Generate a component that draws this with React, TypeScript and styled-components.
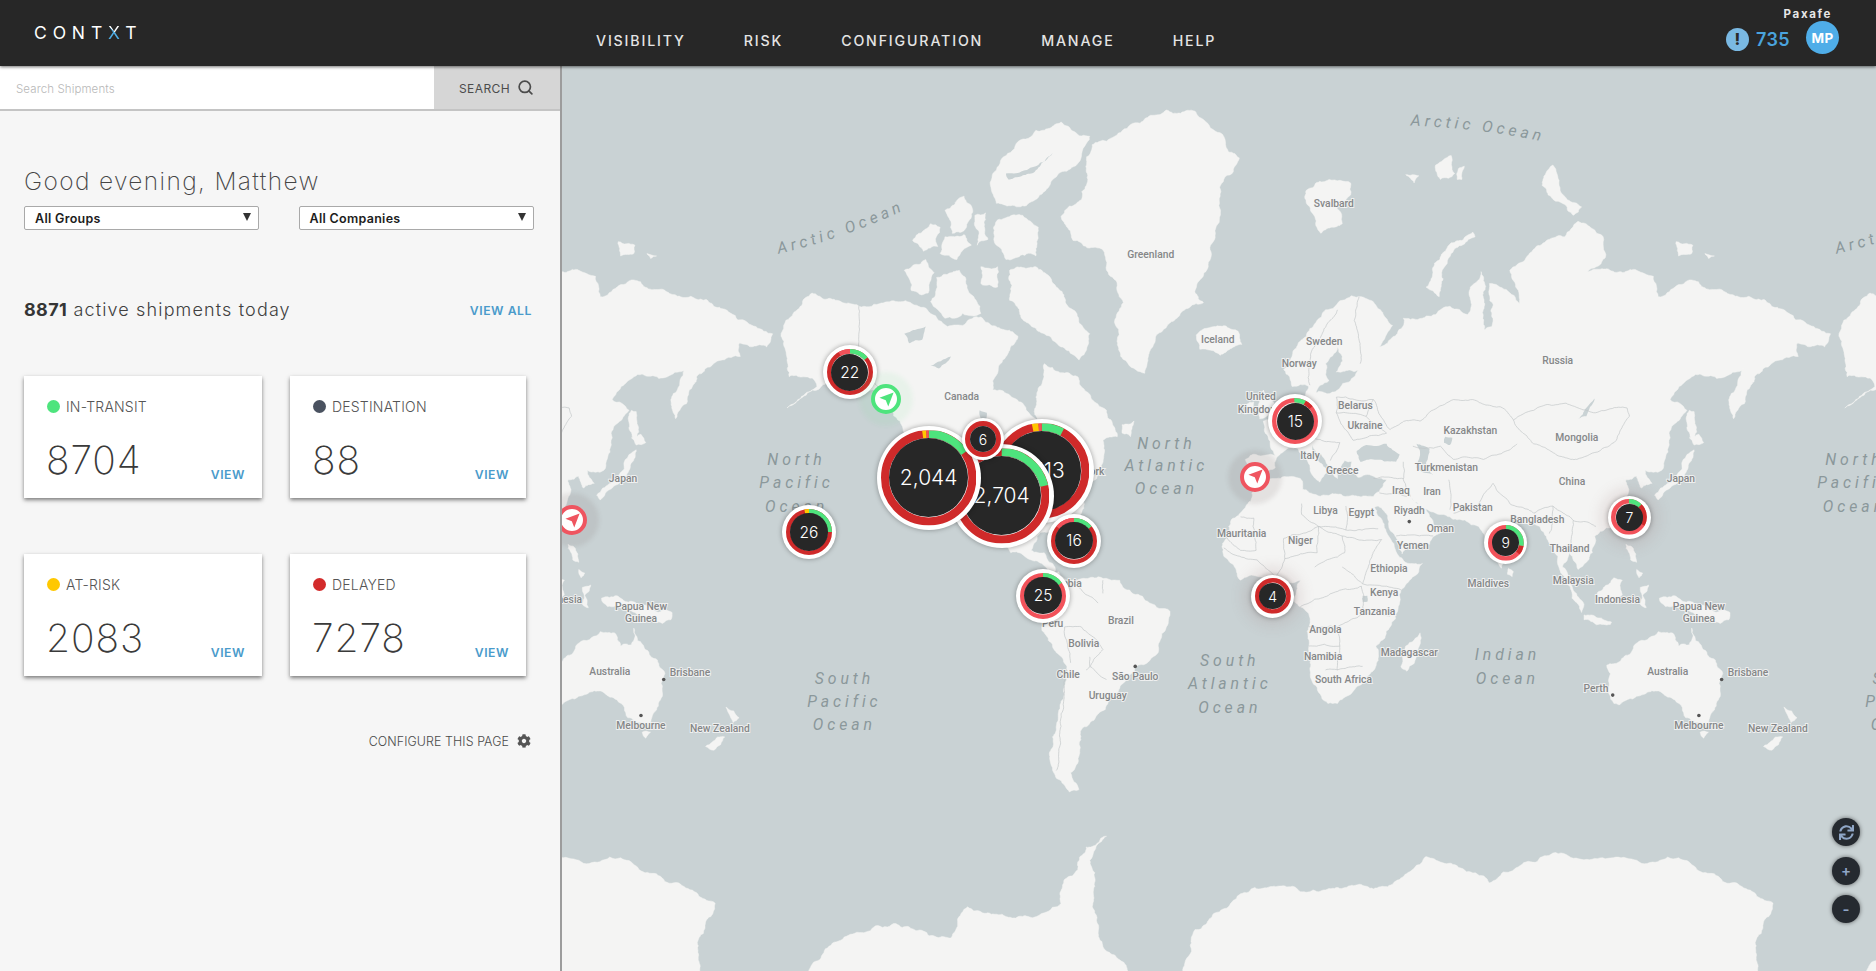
import React from 'react';
import styled, { createGlobalStyle } from 'styled-components';
import { FaCog, FaSync } from 'react-icons/fa';
import { Search } from 'lucide-react';

const Global = createGlobalStyle`
  html, body { margin: 0; padding: 0; height: 100%; overflow: hidden; background: #c9d2d4; }
  * { box-sizing: border-box; }
  #root { height: 100%; }
`;

const UI = `"Inter", "Liberation Sans", sans-serif`;

const Page = styled.div`
  display: grid;
  grid-template-columns: 562px 1fr;
  grid-template-rows: 66px 1fr;
  width: 100%;
  height: 100vh;
  font-family: ${UI};
`;

const Header = styled.header`
  grid-column: 1 / 3;
  display: flex;
  background: #272727;
  color: #e8e8e8;
  box-shadow: 0 1px 3px rgba(0, 0, 0, 0.55);
  position: relative;
  z-index: 5;
`;
const LogoCell = styled.div`
  width: 562px;
  padding: 24px 0 0 34px;
  flex: none;
`;
const Logo = styled.div`
  font-size: 17.5px;
  line-height: 18px;
  font-weight: 400;
  letter-spacing: 5.85px;
  color: #fff;
`;
const LogoX = styled.span`
  background: linear-gradient(45deg, #4fb0e8 46%, #fff 47%);
  -webkit-background-clip: text;
  background-clip: text;
  color: transparent;
`;
const Nav = styled.nav`
  display: flex;
  gap: 58px;
  padding: 32.5px 0 0 34px;
  flex: 1;
`;
const NavItem = styled.a`
  font-size: 14.2px;
  line-height: 16px;
  font-weight: 500;
  letter-spacing: 1.84px;
  color: #e4e4e4;
`;
const Account = styled.div`
  display: flex;
  flex-direction: column;
  align-items: flex-end;
  padding: 8px 37px 0 0;
`;
const Company = styled.div`
  font-size: 11.5px;
  line-height: 13px;
  font-weight: 700;
  letter-spacing: 1.65px;
  margin-right: 7px;
  color: #e6e6e6;
`;
const AccountRow = styled.div`
  display: flex;
  align-items: center;
`;
const AlertIcon = styled.span`
  width: 23px;
  height: 23px;
  border-radius: 50%;
  background: #7ab9e3;
  color: #2a2a2a;
  font-size: 16px;
  font-weight: 800;
  display: flex;
  align-items: center;
  justify-content: center;
  margin-top: 3px;
`;
const AlertCount = styled.span`
  font-size: 18px;
  font-weight: 600;
  letter-spacing: 0.4px;
  color: #4aa3dd;
  margin: 3px 16px 0 7px;
`;
const Avatar = styled.span`
  width: 33px;
  height: 33px;
  border-radius: 50%;
  background: #4fade8;
  color: #fff;
  font-size: 13.5px;
  font-weight: 700;
  letter-spacing: 0.4px;
  display: flex;
  align-items: center;
  justify-content: center;
`;

const Sidebar = styled.aside`
  background: #f6f6f6;
  border-right: 2px solid #9c9c9c;
  position: relative;
  z-index: 3;
  overflow: hidden;
`;
const SearchBar = styled.div`
  display: flex;
  height: 45px;
  border-bottom: 2px solid #c4c4c4;
`;
const SearchField = styled.div`
  flex: 1;
  background: #fff;
  color: #b8b8b8;
  font-size: 11.5px;
  font-weight: 300;
  letter-spacing: 0.1px;
  display: flex;
  align-items: center;
  padding: 2px 0 0 16px;
`;
const SearchButton = styled.div`
  width: 126px;
  background: #d6d6d6;
  color: #4c4c4c;
  font-size: 12px;
  letter-spacing: 0.4px;
  display: flex;
  align-items: center;
  gap: 7px;
  padding: 2px 0 0 25px;
  svg { margin-top: -2px; }
`;
const Content = styled.div`
  padding: 55px 0 0 24px;
`;
const Greeting = styled.h1`
  margin: 0;
  font-size: 24.5px;
  line-height: 30px;
  font-weight: 200;
  letter-spacing: 1.36px;
  color: #454545;
`;
const Filters = styled.div`
  display: flex;
  gap: 39.5px;
  margin-top: 10px;
`;
const Dropdown = styled.div`
  width: 235px;
  height: 24px;
  border: 1px solid #a9a9a9;
  border-radius: 2px;
  background: #fff;
  display: flex;
  align-items: center;
  justify-content: space-between;
  padding: 0 7px 0 10px;
  font-size: 12.5px;
  font-weight: 600;
  letter-spacing: 0.3px;
  color: #1c1c1c;
`;
const Caret = styled.span`
  width: 0;
  height: 0;
  border-left: 4px solid transparent;
  border-right: 4px solid transparent;
  border-top: 8px solid #333;
  margin-top: -2px;
`;
const SummaryRow = styled.div`
  display: flex;
  justify-content: space-between;
  align-items: center;
  height: 26px;
  margin: 66px 28px 0 0;
`;
const Summary = styled.div`
  font-size: 18px;
  font-weight: 300;
  letter-spacing: 1.14px;
  color: #404040;
`;
const SummaryCount = styled.b`
  font-weight: 700;
  letter-spacing: 0.4px;
  color: #353535;
`;
const LinkText = styled.a`
  font-size: 12.2px;
  line-height: 14px;
  font-weight: 600;
  letter-spacing: 0.55px;
  color: #4a9bcb;
`;
const ViewAll = styled(LinkText)`
  margin-top: 3px;
`;
const Cards = styled.div`
  display: grid;
  grid-template-columns: 238px 236px;
  grid-auto-rows: 122px;
  column-gap: 28px;
  row-gap: 56px;
  margin-top: 54px;
`;
const Card = styled.div`
  background: #fff;
  box-shadow: 0 2px 4px rgba(0, 0, 0, 0.5);
  padding: 22px 17px 16px 23px;
  display: flex;
  flex-direction: column;
  justify-content: space-between;
`;
const CardLabel = styled.div`
  display: flex;
  align-items: center;
  gap: 6px;
  font-size: 14px;
  line-height: 17px;
  font-weight: 300;
  letter-spacing: 0.2px;
  color: #555;
`;
const Dot = styled.span<{ $c: string }>`
  width: 13px;
  height: 13px;
  border-radius: 50%;
  background: ${p => p.$c};
`;
const CardBottom = styled.div`
  display: flex;
  justify-content: space-between;
  align-items: flex-end;
`;
const CardValue = styled.div`
  font-size: 39px;
  line-height: 44px;
  font-weight: 200;
  letter-spacing: 0.9px;
  margin-left: -1px;
  color: #3a3a3a;
`;
const Configure = styled.div`
  display: flex;
  justify-content: flex-end;
  align-items: center;
  gap: 8px;
  height: 16px;
  margin: 57px 29px 0 0;
  font-size: 12.4px;
  font-weight: 300;
  letter-spacing: 0.1px;
  color: #4a4a4a;
  svg { color: #555; }
`;

const MapPane = styled.main`
  position: relative;
  overflow: hidden;
  background: #c9d2d4;
`;
const MapSvg = styled.svg`
  display: block;
  width: 100%;
  height: 100%;
`;
const Land = styled.polygon`
  fill: #f4f4f3;
  stroke: #f4f4f3;
  stroke-width: 0.4;
  stroke-linejoin: round;
`;
const Water = styled.polygon`
  fill: #c9d2d4;
`;
const Border = styled.polyline`
  fill: none;
  stroke: #c1c5c6;
  stroke-width: 0.55;
`;
const PlaceText = styled.text`
  font-family: "Roboto", "Liberation Sans", sans-serif;
  font-size: 8.6px;
  font-weight: 500;
  fill: #858788;
  text-anchor: middle;
  paint-order: stroke;
  stroke: rgba(245, 245, 245, 0.85);
  stroke-width: 1.6px;
`;
const CityDot = styled.circle`
  fill: #555;
`;
const OceanText = styled.text`
  font-family: "Roboto", "Liberation Sans", sans-serif;
  font-size: 13.2px;
  font-style: italic;
  letter-spacing: 3.3px;
  fill: #8b989b;
  text-anchor: middle;
`;
const ArcticText = styled(OceanText)`
  text-anchor: start;
`;

const Marker = styled.div<{ $x: number; $y: number; $s: number; $z: number }>`
  position: absolute;
  left: ${p => p.$x - 562 - p.$s / 2}px;
  top: ${p => p.$y - 66 - p.$s / 2}px;
  width: ${p => p.$s}px;
  height: ${p => p.$s}px;
  z-index: ${p => p.$z};
`;
const BubbleShell = styled(Marker)<{ $halo?: boolean }>`
  border-radius: 50%;
  background: #fff;
  box-shadow: 0 0 5px rgba(0, 0, 0, 0.35) ${p => (p.$halo ? ', 0 0 14px 8px rgba(150, 110, 115, 0.16)' : '')};
  display: flex;
  align-items: center;
  justify-content: center;
`;
const BubbleRing = styled.svg<{ $inset: number }>`
  position: absolute;
  inset: ${p => p.$inset}px;
  width: calc(100% - ${p => p.$inset * 2}px);
  height: calc(100% - ${p => p.$inset * 2}px);
  transform: rotate(-90deg);
`;
const BubbleCore = styled.div<{ $s: number; $f: number }>`
  position: relative;
  width: ${p => p.$s}px;
  height: ${p => p.$s}px;
  border-radius: 50%;
  background: #272727;
  color: #fff;
  font-size: ${p => p.$f}px;
  font-weight: 300;
  display: flex;
  align-items: center;
  justify-content: center;
`;
const Pin = styled(Marker)<{ $c: string; $h: string }>`
  border-radius: 50%;
  background: #fff;
  border: 4px solid ${p => p.$c};
  box-shadow: 0 0 4px 12px ${p => p.$h};
  display: flex;
  align-items: center;
  justify-content: center;
  color: ${p => p.$c};
`;
const MapControls = styled.div`
  position: absolute;
  right: 16px;
  bottom: 47.7px;
  display: flex;
  flex-direction: column;
  gap: 10.6px;
`;
const MapButton = styled.button`
  width: 28px;
  height: 28px;
  padding: 0;
  border: 0;
  border-radius: 50%;
  background: #252a30;
  color: #8fa6c6;
  font-family: ${UI};
  font-size: 15px;
  font-weight: 600;
  box-shadow: 0 0 4px rgba(0, 0, 0, 0.55);
  display: flex;
  align-items: center;
  justify-content: center;
`;

const G = '#4ee47d', Y = '#ffc800', R = '#cf2a2a', P = '#f2525a';

const LAND = [
  // Eurasia + Africa
  '1041,384 1050,380 1066,381 1060,365 1056,352 1075,345 1087,336 1093,326 1095,315 1099,317 1100,328 1118,326 1129,318 1136,309 1117,311 1122,298 1118,290 1108,304 1111,318 1099,329 1094,323 1080,323 1073,309 1080,298 1092,281 1108,259 1122,251 1138,248 1150,255 1164,272 1155,287 1153,290 1168,279 1173,266 1185,267 1200,263 1212,256 1227,263 1229,240 1238,227 1241,237 1241,276 1247,273 1245,237 1259,242 1270,254 1262,226 1284,206 1308,198 1319,185 1340,198 1342,215 1326,228 1368,226 1382,231 1386,248 1400,240 1414,234 1435,242 1453,248 1470,250 1488,258 1516,273 1530,279 1525,290 1502,287 1503,298 1474,308 1463,323 1449,350 1447,329 1467,301 1442,315 1414,315 1396,334 1410,343 1395,362 1389,393 1375,393 1381,404 1372,408 1368,398 1359,401 1361,412 1354,437 1333,448 1331,462 1319,476 1312,462 1306,474 1315,488 1303,474 1298,457 1287,440 1270,435 1258,460 1255,475 1241,449 1236,440 1212,432 1198,428 1176,414 1195,432 1206,444 1195,455 1172,463 1164,445 1152,423 1149,424 1160,447 1168,463 1178,471 1189,471 1171,493 1162,524 1150,540 1152,552 1139,571 1118,588 1110,588 1095,560 1094,513 1083,504 1087,485 1052,482 1037,485 1023,465 1022,454 1029,435 1043,421 1048,409 1060,401 1087,400 1089,409 1109,414 1148,415 1153,411 1159,401 1148,398 1135,399 1128,392 1130,386 1124,385 1120,392 1118,400 1112,392 1108,385 1096,370 1106,390 1110,394 1103,403 1092,384 1085,375 1075,376 1067,383 1066,391 1049,403 1041,398',
  // North America
  '653,281 661,265 679,245 700,251 718,256 735,254 749,252 778,262 792,273 820,265 841,276 851,281 841,298 834,312 830,326 855,337 867,351 866,332 873,304 901,315 925,343 934,365 922,368 919,394 905,415 900,440 907,458 903,460 895,440 870,445 862,460 873,462 880,471 882,478 872,472 862,468 845,462 820,445 800,425 775,395 755,359 746,343 732,326 714,323 693,319 658,341 683,323 679,316 660,315 658,301',
  // Greenland
  '913,121 925,118 953,103 975,92 999,93 1006,100 1020,111 1027,127 1036,132 1030,145 1023,150 1020,164 1016,195 1010,223 999,245 1006,253 985,265 968,279 960,298 957,312 943,304 934,284 932,267 939,253 925,226 922,209 897,201 887,181 904,167 908,142',
  // Canadian Arctic
  '839,131 866,109 887,102 911,114 904,131 883,148 869,163 858,172 845,172 833,170 828,155 830,145',
  '833,185 855,180 868,190 866,214 841,217 833,205',
  '844,226 866,223 883,240 897,259 911,279 902,301 887,290 873,279 855,267 844,251',
  '756,226 774,217 781,228 776,245 762,243',
  '783,232 802,226 816,251 820,262 790,266 778,252',
  '763,201 778,187 786,190 784,206 772,210',
  '790,176 806,164 812,172 808,190 796,195',
  '790,198 806,196 812,205 800,217 786,212',
  '815,180 824,178 826,200 817,205',
  '820,223 834,223 834,240 820,237',
  '938,355 948,352 945,365 938,362',
  // South America
  '885,478 894,485 918,482 936,485 961,504 978,511 975,524 964,549 950,557 939,571 924,593 904,610 902,632 895,646 902,660 894,662 880,644 883,607 892,560 871,527 873,518 868,500',
  // Australia & Tasmania
  '1343,556 1363,546 1370,536 1386,528 1398,529 1403,540 1412,539 1414,525 1424,543 1440,563 1438,580 1428,607 1421,604 1409,600 1400,585 1389,579 1368,582 1354,589 1349,588 1345,571',
  '1421,612 1428,612 1424,617',
  // New Zealand
  '1491,591 1502,600 1497,604 1495,600',
  '1490,616 1481,627 1474,624 1484,616',
  // Madagascar, Sri Lanka
  '1187,529 1185,546 1176,561 1171,557 1175,540 1182,535',
  '1261,475 1265,478 1264,482 1260,480',
  // Indonesia, Philippines, New Guinea
  '1304,478 1310,480 1324,505 1322,512 1314,500',
  '1324,514 1347,520 1346,522 1324,518',
  '1335,496 1349,483 1356,485 1356,497 1349,503 1338,500',
  '1371,491 1378,489 1373,498 1376,508 1371,505',
  '1387,500 1400,498 1420,506 1446,512 1445,518 1430,520 1418,514 1405,508 1392,507',
  '1359,455 1364,457 1368,470 1363,468',
  '1368,476 1373,479 1370,483',
  // Japan, Sakhalin
  '1383,414 1388,408 1400,402 1406,392 1410,380 1416,376 1413,386 1408,398 1396,408 1386,418',
  '1412,366 1420,363 1424,370 1416,372',
  '1412,343 1416,344 1417,371 1413,366',
  // UK, Ireland, Iceland
  '1056,326 1063,332 1066,345 1053,350 1052,340',
  '1042,338 1048,336 1047,345 1040,346',
  '1000,280 1015,273 1035,277 1038,288 1020,297 1003,292',
  // Arctic islands
  '1092,159 1111,150 1129,153 1129,163 1117,173 1122,187 1104,195 1099,181 1092,170',
  '1231,194 1233,198 1213,212 1205,228 1203,248 1192,240 1199,220 1213,203',
  '1298,138 1303,153 1310,167 1322,173 1315,180 1308,171 1294,163 1289,155 1292,145',
  '1175,146 1186,147 1182,153',
  '1200,138 1213,130 1216,145 1204,150',
  '1219,141 1224,139 1222,150 1218,150',
  '1401,202 1415,205 1414,212 1403,214',
  '1425,212 1433,214 1428,216',
  // Antarctica
  '980,830 989,812 999,777 1016,763 1037,747 1062,741 1157,741 1192,716 1245,738 1298,713 1368,719 1403,717 1456,741 1482,755 1467,788 1467,830',
  '668,830 676,812 693,791 749,772 795,784 809,758 855,766 873,763 887,755 890,735 901,727 908,708 925,699 911,719 915,763 918,780 943,812 950,830',
];

const WATER = [
  '1134,377 1142,372 1159,371 1170,380 1167,386 1148,384 1137,386',
  '1184,371 1195,375 1192,387 1198,397 1184,391 1187,379',
  '1319,350 1333,333 1326,348',
  '756,279 774,273 771,284 760,287',
  '778,306 795,298 785,308',
  '819,343 825,345 824,351 820,350',
  '1208,365 1214,366 1212,372 1207,370',
  '1139,498 1143,498 1143,503 1139,503',
  '841,145 866,139 880,128 862,145 843,150',
];

const BORDERS = [
  '718,256 718,290 746,343',
  '780,378 838,378 860,385',
  '1136,248 1132,268 1137,290 1137,304',
  '1118,259 1097,292 1094,309 1095,322',
  '1117,332 1148,334 1142,348 1117,345 1117,332',
  '1117,345 1131,368 1159,362 1142,348',
  '1148,334 1162,359 1181,351 1187,352 1215,334 1231,334 1254,340 1265,351 1282,343 1309,337 1332,345 1360,341 1362,348 1351,368 1318,384 1282,371 1268,357 1265,351',
  '1181,373 1204,373 1215,384 1240,384 1268,371',
  '1087,355 1098,366 1120,370 1112,385',
  '1075,345 1080,370',
  '1173,386 1173,401 1179,415',
  '1211,401 1212,426',
  '1148,400 1173,400',
  '1153,412 1176,415',
  '1167,448 1198,448',
  '1215,429 1234,426 1243,410 1248,404 1262,421 1282,429 1298,423 1295,446',
  '1298,423 1315,435 1334,440',
  '1315,435 1312,462',
  '1088,421 1088,430 1102,440 1125,443 1125,423',
  '1125,443 1152,442',
  '1022,446 1037,460 1050,460 1048,433 1037,432',
  '1073,450 1102,440 1101,462 1074,467 1073,450',
  '1102,440 1122,448 1124,462 1099,474',
  '1122,448 1155,451 1139,488 1122,474',
  '1023,458 1051,468 1066,482',
  '1074,467 1066,482',
  '1087,507 1138,490 1139,513 1118,524 1094,524',
  '1094,540 1120,540 1118,560 1108,560',
  '1118,560 1139,557',
  '1139,513 1162,515',
  '1118,524 1120,540',
  '1139,488 1171,493',
  '890,524 904,524 922,543 908,560',
  '895,554 890,524',
  '892,560 883,644',
  '911,549 911,557 925,568',
  '901,490 918,504',
  '922,485 922,496',
];

// Breaks a coarse traced outline into an irregular coastline (seeded, so every load is the same).
function coast(points: string, seed: number, amp: number, closed: boolean): string {
  let s = seed * 7919 + 17;
  const rnd = () => {
    s = (s * 16807) % 2147483647;
    return s / 2147483647 - 0.5;
  };
  const pts = points.split(' ').map(p => p.split(',').map(Number));
  const out: number[][] = [];
  const split = (a: number[], b: number[]) => {
    const dx = b[0] - a[0], dy = b[1] - a[1];
    const l = Math.hypot(dx, dy);
    if (l < 2.4) return;
    const d = Math.max(-2.2, Math.min(2.2, rnd() * l * amp));
    const m = [(a[0] + b[0]) / 2 - (dy / l) * d, (a[1] + b[1]) / 2 + (dx / l) * d];
    split(a, m);
    out.push(m);
    split(m, b);
  };
  pts.forEach((p, i) => {
    out.push(p);
    const next = pts[i + 1] || (closed ? pts[0] : null);
    if (next) split(p, next);
  });
  return out.map(p => `${p[0].toFixed(1)},${p[1].toFixed(1)}`).join(' ');
}

const LAND_SHAPES = LAND.map((p, i) => coast(p, i + 1, 0.3, true));
const WATER_SHAPES = WATER.map((p, i) => coast(p, i + 101, 0.2, true));
const BORDER_LINES = BORDERS.map((p, i) => coast(p, i + 201, 0.16, false));

const PLACES: [string, number, number][] = [
  ['Greenland', 962, 216], ['Canada', 804, 334], ['Iceland', 1018, 287], ['Svalbard', 1115, 173],
  ['Sweden', 1107, 288], ['Norway', 1086, 307], ['Russia', 1302, 304], ['United', 1054, 334], ['Kingdom', 1052, 345],
  ['Belarus', 1133, 342], ['Ukraine', 1141, 359], ['Kazakhstan', 1229, 363], ['Mongolia', 1318, 369], ['Italy', 1095, 384],
  ['Greece', 1122, 396], ['Turkmenistan', 1209, 394], ['Iraq', 1171, 413], ['Iran', 1197, 414], ['China', 1314, 405],
  ['Japan', 1405, 403], ['Pakistan', 1231, 427], ['Libya', 1108, 430], ['Egypt', 1138, 431], ['Riyadh', 1178, 430],
  ['Oman', 1204, 445], ['Bangladesh', 1285, 437], ['Mauritania', 1038, 449], ['Niger', 1087, 455], ['Yemen', 1181, 459],
  ['Thailand', 1312, 461], ['Ethiopia', 1161, 478], ['Maldives', 1244, 491], ['Malaysia', 1315, 488], ['Kenya', 1157, 498],
  ['Indonesia', 1352, 504], ['Tanzania', 1149, 514], ['Angola', 1108, 529], ['Papua New', 1420, 510], ['Guinea', 1420, 520],
  ['Madagascar', 1178, 548], ['Namibia', 1106, 552], ['South Africa', 1123, 571], ['Australia', 1394, 564], ['Brisbane', 1461, 565],
  ['Perth', 1334, 578], ['Melbourne', 1420, 609], ['New Zealand', 1486, 612], ['Peru', 880, 524], ['Brazil', 937, 522],
  ['Bolivia', 906, 541], ['Chile', 893, 567], ['São Paulo', 949, 568], ['Uruguay', 926, 584], ['Colombia', 886, 491], ['New York', 905, 397],
];

const CITIES: [number, number][] = [[1439, 568], [1348, 581], [1420, 598], [949, 557], [1178, 436]];

const OCEANS: [string, number, number][] = [
  ['North', 666, 389], ['Pacific', 666, 408], ['Ocean', 666, 428],
  ['South', 706, 572], ['Pacific', 706, 591], ['Ocean', 706, 610],
  ['South', 1028, 557], ['Atlantic', 1028, 576], ['Ocean', 1028, 596],
  ['North', 975, 375], ['Atlantic', 975, 394], ['Ocean', 975, 413],
  ['Indian', 1260, 552], ['Ocean', 1260, 572],
];

const NAV = ['VISIBILITY', 'RISK', 'CONFIGURATION', 'MANAGE', 'HELP'];
const STATS = [
  { label: 'IN-TRANSIT', value: '8704', color: '#4ee47d' },
  { label: 'DESTINATION', value: '88', color: '#4a5260' },
  { label: 'AT-RISK', value: '2083', color: '#ffc800' },
  { label: 'DELAYED', value: '7278', color: '#d32b2b' },
];

type Seg = [number, number, string];
type BubbleData = { t: string; x: number; y: number; s: number; w: number; r: number; f: number; z: number; segs: Seg[]; halo?: boolean };

const BUBBLES: BubbleData[] = [
  { t: '2,113', x: 1041.7, y: 471, s: 104, w: 4.3, r: 8, f: 21, z: 1, segs: [[0, 360, R], [0, 28, G], [348, 356, Y], [356, 360, P]] },
  { t: '2,704', x: 1001.7, y: 495.7, s: 104, w: 4.3, r: 8, f: 21, z: 2, segs: [[0, 360, R], [0, 77, G]] },
  { t: '2,044', x: 928.7, y: 477.7, s: 104, w: 4.3, r: 8, f: 21, z: 3, segs: [[0, 360, R], [0, 55, G], [352, 357, Y], [357, 360, P]] },
  { t: '6', x: 983, y: 439, s: 42, w: 3, r: 5, f: 14, z: 4, segs: [[0, 360, R]] },
  { t: '22', x: 849.7, y: 372.3, s: 54, w: 4, r: 4.4, f: 15.5, z: 4, segs: [[0, 360, R], [0, 50, G], [330, 360, P]] },
  { t: '26', x: 809, y: 532, s: 54, w: 4, r: 4.4, f: 15.5, z: 4, segs: [[0, 360, R], [0, 90, G], [348, 360, Y]] },
  { t: '16', x: 1074, y: 540.7, s: 54, w: 4, r: 4.4, f: 15.5, z: 4, segs: [[0, 360, R], [0, 50, G], [310, 360, P]] },
  { t: '25', x: 1043, y: 595.7, s: 54, w: 4, r: 4.4, f: 15.5, z: 4, segs: [[0, 360, P], [0, 55, G]] },
  { t: '15', x: 1295.3, y: 421.3, s: 54, w: 4, r: 4.4, f: 15.5, z: 4, segs: [[0, 360, P], [28, 50, R], [358, 360, G], [0, 28, G]] },
  { t: '4', x: 1272.7, y: 596, s: 43, w: 3.6, r: 4.6, f: 14, z: 4, halo: true, segs: [[0, 360, R]] },
  { t: '9', x: 1505.7, y: 542.7, s: 43, w: 3.6, r: 4.6, f: 14, z: 4, segs: [[0, 360, P], [100, 130, R], [0, 100, G]] },
  { t: '7', x: 1629.3, y: 517.3, s: 43, w: 3.6, r: 4.6, f: 14, z: 4, halo: true, segs: [[0, 360, P], [45, 120, R], [0, 45, G]] },
];

const PINS = [
  { x: 886, y: 399, c: '#4ee47d', h: 'rgba(78, 228, 125, 0.07)' },
  { x: 1255, y: 476.7, c: '#ef5560', h: 'rgba(130, 110, 112, 0.14)' },
  { x: 572, y: 520, c: '#ef5560', h: 'rgba(130, 110, 112, 0.14)' },
];

function Bubble({ b }: { b: BubbleData }) {
  const d = b.s - b.w * 2;
  const rad = d / 2 - b.r / 2;
  return (
    <BubbleShell $x={b.x} $y={b.y} $s={b.s} $z={b.z} $halo={b.halo}>
      <BubbleRing $inset={b.w} viewBox={`0 0 ${d} ${d}`}>
        {b.segs.map(([from, to, color], i) => (
          <circle
            key={i}
            cx={d / 2}
            cy={d / 2}
            r={rad}
            fill="none"
            stroke={color}
            strokeWidth={b.r}
            pathLength={360}
            strokeDasharray={`${to - from} 360`}
            strokeDashoffset={-from}
          />
        ))}
      </BubbleRing>
      <BubbleCore $s={d - b.r * 2} $f={b.f}>{b.t}</BubbleCore>
    </BubbleShell>
  );
}

function World() {
  return (
    <g id="world">
      {LAND_SHAPES.map((pts, i) => <Land key={i} points={pts} />)}
      {WATER_SHAPES.map((pts, i) => <Water key={i} points={pts} />)}
      {BORDER_LINES.map((pts, i) => <Border key={i} points={pts} />)}
      {CITIES.map(([x, y], i) => <CityDot key={i} cx={x} cy={y} r={1.5} />)}
      {PLACES.map(([t, x, y], i) => <PlaceText key={i} x={x} y={y}>{t}</PlaceText>)}
      {OCEANS.map(([t, x, y], i) => <OceanText key={i} x={x} y={y}>{t}</OceanText>)}
      <ArcticText><textPath href="#arctic-a">Arctic Ocean</textPath></ArcticText>
      <ArcticText><textPath href="#arctic-b">Arctic Ocean</textPath></ArcticText>
    </g>
  );
}

export default function App() {
  return (
    <Page>
      <Global />
      <Header>
        <LogoCell>
          <Logo>CONT<LogoX>X</LogoX>T</Logo>
        </LogoCell>
        <Nav>
          {NAV.map(n => <NavItem key={n}>{n}</NavItem>)}
        </Nav>
        <Account>
          <Company>Paxafe</Company>
          <AccountRow>
            <AlertIcon>!</AlertIcon>
            <AlertCount>735</AlertCount>
            <Avatar>MP</Avatar>
          </AccountRow>
        </Account>
      </Header>
      <Sidebar>
        <SearchBar>
          <SearchField>Search Shipments</SearchField>
          <SearchButton>SEARCH <Search size={17} strokeWidth={2.4} /></SearchButton>
        </SearchBar>
        <Content>
          <Greeting>Good evening, Matthew</Greeting>
          <Filters>
            <Dropdown>All Groups<Caret /></Dropdown>
            <Dropdown>All Companies<Caret /></Dropdown>
          </Filters>
          <SummaryRow>
            <Summary><SummaryCount>8871</SummaryCount> active shipments today</Summary>
            <ViewAll>VIEW ALL</ViewAll>
          </SummaryRow>
          <Cards>
            {STATS.map(s => (
              <Card key={s.label}>
                <CardLabel><Dot $c={s.color} />{s.label}</CardLabel>
                <CardBottom>
                  <CardValue>{s.value}</CardValue>
                  <LinkText>VIEW</LinkText>
                </CardBottom>
              </Card>
            ))}
          </Cards>
          <Configure>CONFIGURE THIS PAGE <FaCog size={14} /></Configure>
        </Content>
      </Sidebar>
      <MapPane>
        <MapSvg viewBox="470 55.2 1098 756.4" preserveAspectRatio="none">
          <defs>
            <path id="arctic-a" d="M651,212 Q705,200 764,172" />
            <path id="arctic-b" d="M1179,105 Q1240,107 1297,120" />
            <World />
          </defs>
          <use href="#world" />
          <use href="#world" x={-884} />
          <use href="#world" x={884} />
        </MapSvg>
        {BUBBLES.map(b => <Bubble key={b.t} b={b} />)}
        {PINS.map(p => (
          <Pin key={p.x} $x={p.x} $y={p.y} $s={30} $z={4} $c={p.c} $h={p.h}>
            <svg width="17" height="17" viewBox="0 0 24 24" fill="currentColor"><path d="M22 2 L2 9.5 L11 13 L14.5 22 Z" /></svg>
          </Pin>
        ))}
        <MapControls>
          <MapButton aria-label="refresh"><FaSync size={15} /></MapButton>
          <MapButton>+</MapButton>
          <MapButton>-</MapButton>
        </MapControls>
      </MapPane>
    </Page>
  );
}
